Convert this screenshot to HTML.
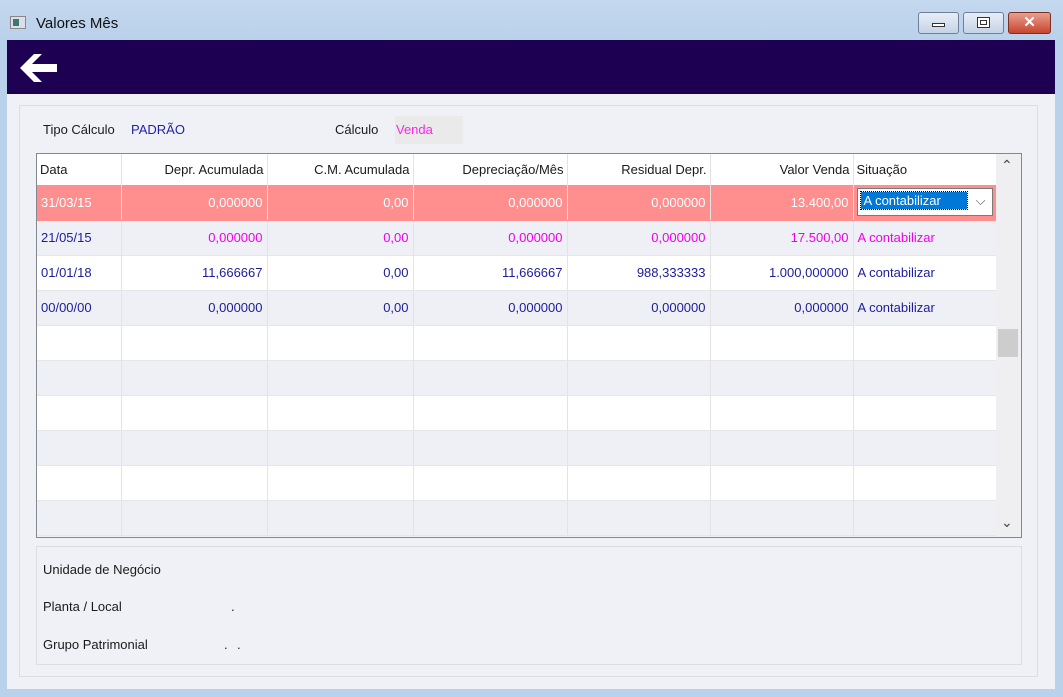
<!DOCTYPE html><html><head><style>
*{margin:0;padding:0;box-sizing:border-box}
body{width:1063px;height:697px;background:#b9d1ea;font-family:"Liberation Sans",sans-serif;font-size:13px;position:relative;overflow:hidden;color:#1a1a1a}
.a{position:absolute}
.title{left:0;top:0;width:1063px;height:40px;background:linear-gradient(#c4d8ee,#b9d1ea)}
.btn{top:12px;height:22px;border:1px solid #6d7f99;border-radius:3px;background:linear-gradient(#e8eef7,#c5d3e6)}
td{height:35px;border-right:1px solid #e3e3e3;border-bottom:1px solid #e6e6e6;padding:0 4px;white-space:nowrap;color:#1c1c9c}
table{border-collapse:collapse;table-layout:fixed}
.r{text-align:right}
tr.alt td{background:#eff0f6}
tr.w td{background:#fff}
tr.sel td{background:#ff8f8f;color:#fff;border-bottom-color:#ff8f8f}
tr.m td{color:#f000f0}
th{height:31px;font-weight:normal;color:#1a1a1a;border-right:1px solid #e3e3e3;padding:0 3px;background:#fff}
</style></head><body>
<div class="a title"></div>
<div class="a" style="left:10px;top:16px;width:16px;height:13px;border:1px solid #888;background:#dde"><div style="margin:2px;width:6px;height:7px;background:#3a7a6a"></div></div>
<div class="a" style="left:36px;top:15px;font-size:15px;color:#111">Valores Mês</div>
<div class="a btn" style="left:918px;width:41px"><div style="margin:10px auto 0;width:13px;height:4px;border:1px solid #333;background:#fff"></div></div>
<div class="a btn" style="left:963px;width:41px"><div style="margin:4px auto 0;width:13px;height:11px;border:1px solid #333;background:#fff;box-shadow:inset 0 0 0 2px #fff,inset 0 0 0 3px #333"></div></div>
<div class="a btn" style="left:1008px;width:43px;background:linear-gradient(#e8a090,#c8442e);border-color:#7a3020;color:#fff;text-align:center;font-weight:bold;font-size:15px;line-height:20px">✕</div>
<div class="a" style="left:7px;top:40px;width:1048px;height:649px;background:#f0f1f7"></div>
<div class="a" style="left:7px;top:40px;width:1048px;height:54px;background:#1d0052"></div>
<svg class="a" style="left:18px;top:52px" width="42" height="32"><path d="M2 16 L16 2 L24 2 L14 12 L39 12 L39 20 L14 20 L24 30 L16 30 Z" fill="#fff"/></svg>
<div class="a" style="left:19px;top:105px;width:1019px;height:572px;border:1px solid #dcdde2"></div>
<div class="a" style="left:43px;top:122px;">Tipo Cálculo</div>
<div class="a" style="left:131px;top:122px;color:#2222aa">PADRÃO</div>
<div class="a" style="left:335px;top:122px;">Cálculo</div>
<div class="a" style="left:395px;top:116px;width:68px;height:28px;background:#eaeaea;color:#ff22ee;padding:6px 0 0 1px">Venda</div>
<div class="a" style="left:36px;top:153px;width:986px;height:385px;border:1px solid #828790;background:#eff0f6;overflow:hidden">
<table style="width:959px">
<colgroup><col style="width:84px"><col style="width:146px"><col style="width:146px"><col style="width:154px"><col style="width:143px"><col style="width:143px"><col style="width:143px"></colgroup>
<tr><th style="text-align:left">Data</th><th class="r">Depr. Acumulada</th><th class="r">C.M. Acumulada</th><th class="r">Depreciação/Mês</th><th class="r">Residual Depr.</th><th class="r">Valor Venda</th><th style="text-align:left">Situação</th></tr>
<tr class="sel"><td>31/03/15</td><td class="r">0,000000</td><td class="r">0,00</td><td class="r">0,000000</td><td class="r">0,000000</td><td class="r">13.400,00</td><td style="padding:0 3px"><div style="background:#fff;border:1px solid #7a7a7a;height:28px;padding:3px;position:relative"><span style="background:#0078d7;color:#fff;outline:1px dotted #000;padding:1px 3px;display:inline-block;width:106px">A contabilizar</span><span style="position:absolute;right:6px;top:4px;color:#555">⌵</span></div></td></tr>
<tr class="alt m"><td style="color:#1c1c9c">21/05/15</td><td class="r">0,000000</td><td class="r">0,00</td><td class="r">0,000000</td><td class="r">0,000000</td><td class="r">17.500,00</td><td>A contabilizar</td></tr>
<tr class="w"><td>01/01/18</td><td class="r">11,666667</td><td class="r">0,00</td><td class="r">11,666667</td><td class="r">988,333333</td><td class="r">1.000,000000</td><td>A contabilizar</td></tr>
<tr class="alt"><td>00/00/00</td><td class="r">0,000000</td><td class="r">0,00</td><td class="r">0,000000</td><td class="r">0,000000</td><td class="r">0,000000</td><td>A contabilizar</td></tr>
<tr class="w"><td></td><td></td><td></td><td></td><td></td><td></td><td></td></tr>
<tr class="alt"><td></td><td></td><td></td><td></td><td></td><td></td><td></td></tr>
<tr class="w"><td></td><td></td><td></td><td></td><td></td><td></td><td></td></tr>
<tr class="alt"><td></td><td></td><td></td><td></td><td></td><td></td><td></td></tr>
<tr class="w"><td></td><td></td><td></td><td></td><td></td><td></td><td></td></tr>
<tr class="alt"><td></td><td></td><td></td><td></td><td></td><td></td><td></td></tr>
</table>
<div class="a" style="left:959px;top:0;width:25px;height:383px;background:#efeff2"></div>
<div class="a" style="left:964px;top:3px;color:#444;font-size:14px">⌃</div>
<div class="a" style="left:961px;top:175px;width:20px;height:28px;background:#cdcdcd"></div>
<div class="a" style="left:964px;top:360px;color:#444;font-size:14px">⌄</div>
</div>
<div class="a" style="left:36px;top:546px;width:986px;height:119px;border:1px solid #dcdde2"></div>
<div class="a" style="left:43px;top:562px">Unidade de Negócio</div>
<div class="a" style="left:43px;top:599px">Planta / Local</div>
<div class="a" style="left:231px;top:599px">.</div>
<div class="a" style="left:43px;top:637px">Grupo Patrimonial</div>
<div class="a" style="left:224px;top:637px">.</div>
<div class="a" style="left:237px;top:637px">.</div>
</body></html>
